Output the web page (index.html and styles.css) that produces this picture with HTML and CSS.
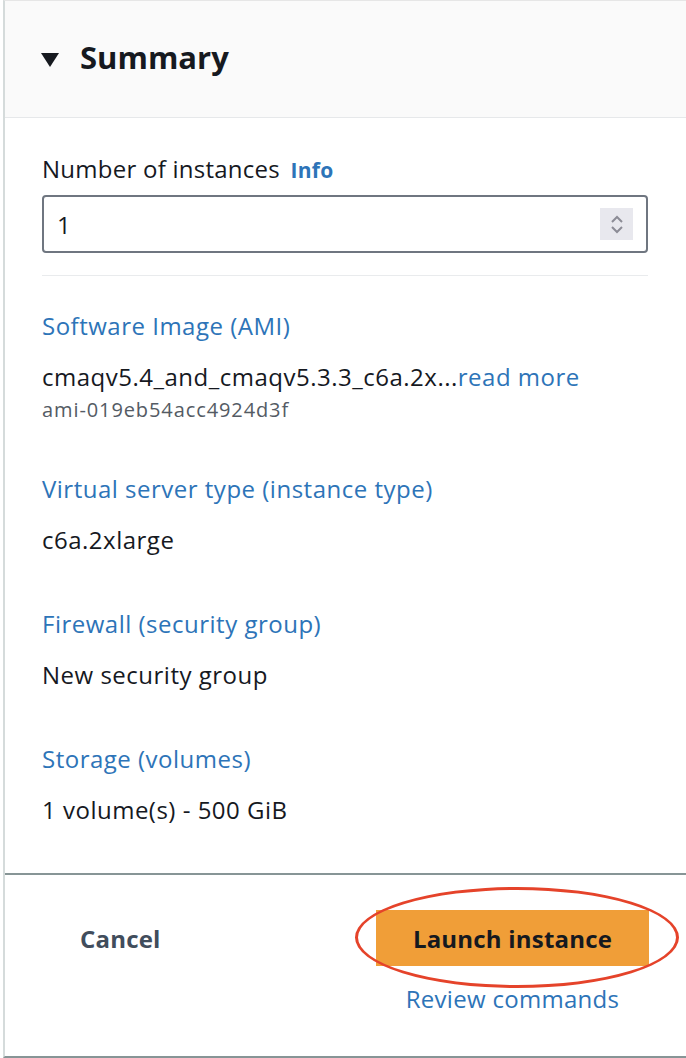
FILE: index.html
```html
<!DOCTYPE html>
<html>
<head>
<meta charset="utf-8">
<link rel="stylesheet" href="styles.css">
</head>
<body>
<div class="panel">
  <div class="header">
    <span class="caret"></span>
    <h2 class="title">Summary</h2>
  </div>
  <div class="content">
    <div class="field-label">Number of instances <a class="info">Info</a></div>
    <div class="input">
      <span class="value">1</span>
      <span class="spinner">
        <svg width="14" height="24" viewBox="0 0 14 24"><path d="M2 10 L7 5 L12 10" fill="none" stroke="#8c8c96" stroke-width="2"/><path d="M2 15 L7 20 L12 15" fill="none" stroke="#8c8c96" stroke-width="2"/></svg>
      </span>
    </div>
    <div class="divider"></div>
    <div class="item first">
      <a class="item-title">Software Image (AMI)</a>
      <div class="item-value">cmaqv5.4_and_cmaqv5.3.3_c6a.2x...<a class="link">read more</a></div>
      <div class="item-sub">ami-019eb54acc4924d3f</div>
    </div>
    <div class="item after-sub">
      <a class="item-title">Virtual server type (instance type)</a>
      <div class="item-value">c6a.2xlarge</div>
    </div>
    <div class="item">
      <a class="item-title">Firewall (security group)</a>
      <div class="item-value">New security group</div>
    </div>
    <div class="item">
      <a class="item-title">Storage (volumes)</a>
      <div class="item-value">1 volume(s) - 500 GiB</div>
    </div>
  </div>
  <div class="footer">
    <button class="cancel">Cancel</button>
    <div class="actions">
      <div class="launch-wrap">
        <button class="launch">Launch instance</button>
        <span class="ring"></span>
      </div>
      <a class="review">Review commands</a>
    </div>
  </div>
</div>
</body>
</html>
```
FILE: styles.css
```css
* { box-sizing: border-box; }
html, body {
  margin: 0;
  padding: 0;
  background: #ffffff;
  font-family: "Open Sans", "Noto Sans", sans-serif;
  color: #16191f;
}
.panel {
  margin-left: 3px;
  width: 683px;
  height: 1058px;
  border-left: 2px solid #d5dbdb;
  border-top: 1px solid #e6e6e6;
  border-bottom: 2px solid #879596;
  display: flex;
  flex-direction: column;
}
.header {
  height: 117px;
  background: #fafafa;
  border-bottom: 1px solid #e6e8ea;
  display: flex;
  align-items: center;
  padding-left: 36px;
}
.caret {
  width: 0;
  height: 0;
  border-left: 9px solid transparent;
  border-right: 9px solid transparent;
  border-top: 14px solid #16191f;
  margin-right: 21px;
  margin-top: 1px;
}
.title {
  margin: 0;
  font-size: 31px;
  font-weight: 700;
  color: #16191f;
  letter-spacing: 0;
  position: relative;
  top: -2px;
}
.content {
  padding: 36px 38px 0 37px;
  flex: 1;
}
.field-label {
  font-size: 24px;
  line-height: 30px;
  letter-spacing: 0.25px;
  color: #16191f;
}
.info {
  font-weight: 700;
  color: #2d74b8;
  font-size: 21px;
  letter-spacing: 0.3px;
  margin-left: 4px;
}
.input {
  margin-top: 10px;
  height: 58px;
  border: 2px solid #6f7680;
  border-radius: 4px;
  display: flex;
  align-items: center;
  justify-content: space-between;
  padding: 0 13px 0 13px;
}
.value {
  font-size: 24px;
  color: #16191f;
}
.spinner {
  width: 33px;
  height: 32px;
  background: #e8e8ee;
  display: flex;
  align-items: center;
  justify-content: center;
}
.divider {
  margin-top: 22px;
  height: 1px;
  background: #e9ebed;
}
.item {
  margin-top: 54px;
}
.item.first {
  margin-top: 35px;
}
.item.after-sub {
  margin-top: 51px;
}
.item-title {
  display: block;
  font-size: 24px;
  line-height: 30px;
  letter-spacing: 0.5px;
  color: #2d74b8;
}
.item-value {
  margin-top: 21px;
  font-size: 24px;
  line-height: 30px;
  letter-spacing: 0.5px;
  color: #16191f;
}
.link {
  color: #2d74b8;
}
.item-sub {
  margin-top: 5px;
  font-size: 20px;
  line-height: 26px;
  letter-spacing: 0.9px;
  color: #545b64;
}
.footer {
  height: 183px;
  border-top: 2px solid #879596;
  display: flex;
  justify-content: space-between;
  padding: 35px 37px 0 75px;
}
.cancel {
  background: none;
  border: none;
  padding: 0;
  font-family: inherit;
  font-size: 24px;
  font-weight: 700;
  letter-spacing: 0.2px;
  color: #414d5c;
  height: 56px;
}
.actions {
  display: flex;
  flex-direction: column;
  align-items: center;
}
.launch-wrap {
  position: relative;
}
.launch {
  width: 273px;
  height: 56px;
  background: #f09e38;
  border: none;
  font-family: inherit;
  font-size: 24px;
  font-weight: 700;
  letter-spacing: 0.2px;
  color: #16191f;
}
.ring {
  position: absolute;
  left: -21px;
  top: -23px;
  width: 324px;
  height: 101px;
  border: 3px solid #e5432a;
  border-radius: 50%;
}
.review {
  margin-top: 16px;
  font-size: 24px;
  letter-spacing: 0.3px;
  color: #2d74b8;
}
```
